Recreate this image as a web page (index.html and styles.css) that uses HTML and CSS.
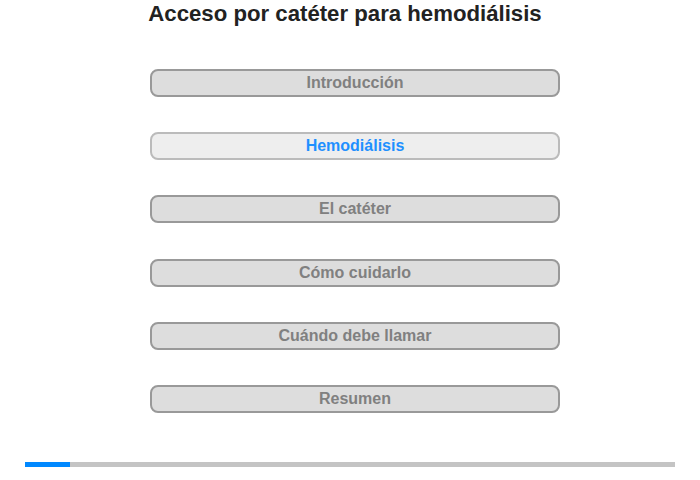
FILE: index.html
```html
<!DOCTYPE html>
<html lang="es">
<head>
  <meta charset="UTF-8">
  <title>Acceso por catéter para hemodiálisis</title>
  <link rel="stylesheet" href="styles.css">
</head>
<body>
  <div class="page">
    <h1>Acceso por catéter para hemodiálisis</h1>
    <div class="menu">
      <div class="menu-item">Introducción</div>
      <div class="menu-item active">Hemodiálisis</div>
      <div class="menu-item">El catéter</div>
      <div class="menu-item">Cómo cuidarlo</div>
      <div class="menu-item">Cuándo debe llamar</div>
      <div class="menu-item">Resumen</div>
    </div>
    <div class="progress">
      <div class="progress-fill" style="width: 45px"></div>
    </div>
  </div>
</body>
</html>
```
FILE: styles.css
```css
body {
  margin: 0;
  padding: 0;
  background: #fff;
  font-family: "Liberation Sans", Arial, sans-serif;
}

.page {
  width: 700px;
  height: 480px;
}

h1 {
  margin: 0;
  padding-top: 1px;
  padding-right: 10px;
  font-size: 22.2px;
  line-height: 25px;
  text-align: center;
  color: #222;
}

.menu {
  width: 410px;
  margin: 43px 0 0 150px;
  display: flex;
  flex-direction: column;
  gap: 35.2px;
}

.menu-item {
  box-sizing: border-box;
  height: 28px;
  border: 2px solid #999;
  border-radius: 8px;
  background: #ddd;
  color: #808080;
  font-size: 16px;
  font-weight: bold;
  line-height: 24px;
  text-align: center;
}

.menu-item.active {
  background: #eee;
  border-color: #bbb;
  color: #1e90ff;
}

.progress {
  margin: 49px 25px 0;
  height: 5px;
  background: #c4c4c4;
}

.progress-fill {
  height: 5px;
  background: #0088ff;
}
```
